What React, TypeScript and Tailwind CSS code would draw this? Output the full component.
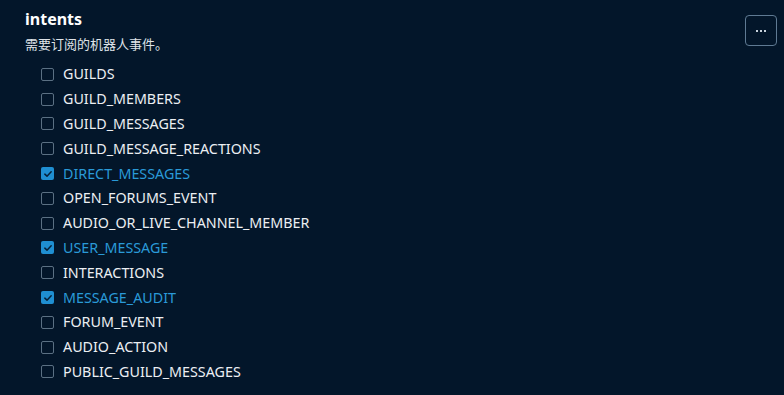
import { useState } from 'react';

const intents = [
  { name: 'GUILDS', checked: false },
  { name: 'GUILD_MEMBERS', checked: false },
  { name: 'GUILD_MESSAGES', checked: false },
  { name: 'GUILD_MESSAGE_REACTIONS', checked: false },
  { name: 'DIRECT_MESSAGES', checked: true },
  { name: 'OPEN_FORUMS_EVENT', checked: false },
  { name: 'AUDIO_OR_LIVE_CHANNEL_MEMBER', checked: false },
  { name: 'USER_MESSAGE', checked: true },
  { name: 'INTERACTIONS', checked: false },
  { name: 'MESSAGE_AUDIT', checked: true },
  { name: 'FORUM_EVENT', checked: false },
  { name: 'AUDIO_ACTION', checked: false },
  { name: 'PUBLIC_GUILD_MESSAGES', checked: false },
];

export default function App() {
  const [items, setItems] = useState(intents);

  const toggle = (i: number) =>
    setItems(prev => prev.map((it, j) => (j === i ? { ...it, checked: !it.checked } : it)));

  return (
    <div className="w-[784px] h-[395px] bg-[#03162a] text-[#e6e9ee] font-['Segoe_UI','Noto_Sans','Noto_Sans_CJK_SC',sans-serif] flex justify-between pl-[25px] pr-[7px] pt-[8px] overflow-hidden">
      <div className="flex flex-col">
        <h3 className="text-[16px] font-bold leading-[22px] text-white">intents</h3>
        <p className="text-[13px] leading-[18px] mt-[5px] text-[#dfe3e8]">需要订阅的机器人事件。</p>
        <ul className="flex flex-col mt-[9px] pl-[16px]">
          {items.map((it, i) => (
            <li key={it.name} className="h-[24.8px] flex items-center gap-[9px] cursor-pointer" onClick={() => toggle(i)}>
              {it.checked ? (
                <span className="w-[13px] h-[13px] rounded-[2px] bg-[#1f8fd2] flex items-center justify-center">
                  <svg viewBox="0 0 12 12" className="w-[10px] h-[10px]" fill="none" stroke="#062038" strokeWidth="1.8" strokeLinecap="round" strokeLinejoin="round">
                    <path d="M2.2 6.2 4.8 8.6 9.8 3.4" />
                  </svg>
                </span>
              ) : (
                <span className="w-[13px] h-[13px] rounded-[2px] border border-[#5b7083]" />
              )}
              <span className={`text-[14.3px] leading-[20px] ${it.checked ? 'text-[#2a9ad8]' : 'text-[#eceff3]'}`}>{it.name}</span>
            </li>
          ))}
        </ul>
      </div>
      <button className="w-[32px] h-[31px] mt-[7px] rounded-[4px] border border-[#5f7a93] flex items-center justify-center gap-[2px]">
        <span className="w-[2px] h-[2px] bg-[#c8d2dc]" />
        <span className="w-[2px] h-[2px] bg-[#c8d2dc]" />
        <span className="w-[2px] h-[2px] bg-[#c8d2dc]" />
      </button>
    </div>
  );
}
